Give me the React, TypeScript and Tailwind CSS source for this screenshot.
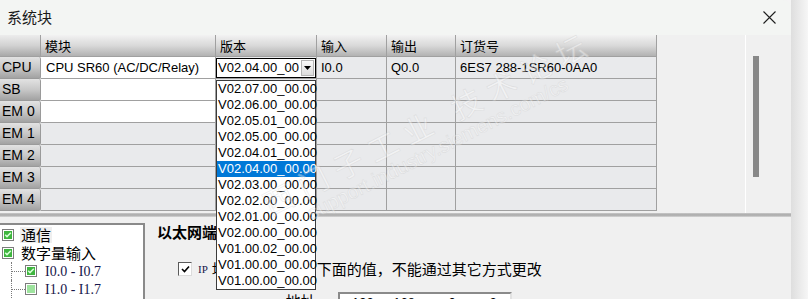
import React from "react";

const SANS = "font-['Liberation_Sans','Noto_Sans_CJK_SC',sans-serif]";
const CJK = "font-['Noto_Sans_CJK_SC','Liberation_Sans',sans-serif]";

const COLS = [
  { key: "module", label: "模块", w: "w-[175px]" },
  { key: "version", label: "版本", w: "w-[101px]" },
  { key: "input", label: "输入", w: "w-[70px]" },
  { key: "output", label: "输出", w: "w-[69px]" },
  { key: "order", label: "订货号", w: "w-[201px]" },
];

type Row = { name: string; module?: string; input?: string; output?: string; order?: string; white?: boolean };

const ROWS: Row[] = [
  { name: "CPU", module: "CPU SR60 (AC/DC/Relay)", input: "I0.0", output: "Q0.0", order: "6ES7 288-1SR60-0AA0", white: true },
  { name: "SB", white: true },
  { name: "EM 0", white: true },
  { name: "EM 1" },
  { name: "EM 2" },
  { name: "EM 3" },
  { name: "EM 4" },
];

const VERSIONS = [
  "V02.07.00_00.00",
  "V02.06.00_00.00",
  "V02.05.01_00.00",
  "V02.05.00_00.00",
  "V02.04.01_00.00",
  "V02.04.00_00.00",
  "V02.03.00_00.00",
  "V02.02.00_00.00",
  "V02.01.00_00.00",
  "V02.00.00_00.00",
  "V01.00.02_00.00",
  "V01.00.00_00.00",
  "V01.00.00_00.00",
];

const SELECTED = 5;

function GreenBox({ checked }: { checked: boolean }) {
  return (
    <svg width="12" height="12" viewBox="0 0 12 12" className="shrink-0">
      <rect x="0.5" y="0.5" width="11" height="11" fill="#ffffff" stroke="#7c7c7c" />
      <rect x="2" y="2" width="8" height="8" fill={checked ? "#3fb53f" : "#9ee39e"} />
      {checked && <path d="M3.2 5.8 L5 7.6 L8.8 3.8" fill="none" stroke="#d9ffd9" strokeWidth="1.5" />}
    </svg>
  );
}

function TreeLine() {
  return (
    <div className="relative ml-[9px] w-[14px] self-stretch">
      <div className="absolute bottom-0 left-0 top-0 border-l border-dotted border-[#7a7a7a]" />
      <div className="absolute left-0 right-0 top-1/2 border-t border-dotted border-[#7a7a7a]" />
    </div>
  );
}

export default function App() {
  return (
    <div className={`relative flex h-[299px] w-[808px] overflow-hidden bg-[#f4f4f4] text-[13px] text-black ${SANS}`}>
      <div className="flex w-[791px] shrink-0 flex-col overflow-hidden rounded-tr-[8px] bg-[#f0f0f0]">
        {/* title bar */}
        <div className="flex h-[35px] shrink-0 items-center justify-between bg-[#f3f5f3] pl-[7px] pr-[15px]">
          <span className={`text-[15px] text-[#1a1a1a] ${CJK}`}>系统块</span>
          <svg width="13" height="13" viewBox="0 0 13 13">
            <path d="M0.5 0.5 L12.5 12.5 M12.5 0.5 L0.5 12.5" stroke="#1f1f1f" strokeWidth="1.1" />
          </svg>
        </div>

        {/* module table */}
        <div className="flex h-[178px] shrink-0">
          <div className="flex w-[657px] flex-col">
            <div className="flex h-[22px] shrink-0">
              <div className="h-full w-[41px] border-b border-r border-[#a0a0a0] bg-gradient-to-b from-[#ececec] via-[#d2d2d2] to-[#a9a9a9]" />
              {COLS.map((c) => (
                <div
                  key={c.key}
                  className={`${c.w} flex h-full items-center border-b border-r border-[#a0a0a0] bg-gradient-to-b from-[#f2f2f2] via-[#d9d9d9] to-[#b2b2b2] pl-[4px] text-[13px] ${CJK}`}
                >
                  {c.label}
                </div>
              ))}
            </div>
            {ROWS.map((r, i) => (
              <div key={r.name} className="flex h-[22px] shrink-0">
                <div className="flex h-full w-[41px] items-center rounded-r-[2px] border-b border-r border-[#9a9a9a] bg-gradient-to-b from-[#e2e2e2] via-[#c8c8c8] to-[#a2a2a2] pl-[2px] text-[14px]">
                  {r.name}
                </div>
                <div
                  className={`flex h-full w-[175px] items-center border-b border-r border-[#a0a0a0] pl-[5px] ${r.white ? "bg-white" : "bg-[#e9eaec]"}`}
                >
                  {r.module}
                </div>
                <div className="flex h-full w-[101px] items-center border-b border-r border-[#a0a0a0] bg-[#e9eaec]">
                  {i === 0 && (
                    <div className="flex h-[20px] w-[100px] items-center border border-black bg-white pl-[1px]">
                      <span className="flex-1 overflow-hidden whitespace-nowrap text-[13px]">V02.04.00_00</span>
                      <div className="mr-px flex h-[16px] w-[13px] items-center justify-center border border-[#b5b5b5] bg-gradient-to-b from-[#fafafa] to-[#dcdcdc]">
                        <svg width="7" height="4" viewBox="0 0 7 4">
                          <path d="M0 0 L7 0 L3.5 4 Z" fill="#000" />
                        </svg>
                      </div>
                    </div>
                  )}
                </div>
                <div className="flex h-full w-[70px] items-center border-b border-r border-[#a0a0a0] bg-[#e9eaec] pl-[4px]">
                  {r.input}
                </div>
                <div className="flex h-full w-[69px] items-center border-b border-r border-[#a0a0a0] bg-[#e9eaec] pl-[4px]">
                  {r.output}
                </div>
                <div className="flex h-full w-[201px] items-center border-b border-r border-[#a0a0a0] bg-[#e9eaec] pl-[4px]">
                  {r.order}
                </div>
              </div>
            ))}
          </div>
          <div className="w-[88px]" />
          <div className="w-px bg-white" />
          <div className="flex flex-1 pl-[7px] pt-[21px]">
            <div className="h-[121px] w-[6px] bg-[#888888]" />
          </div>
        </div>

        {/* splitter */}
        <div className="h-[4px] shrink-0 bg-gradient-to-b from-[#c9c9c9] via-[#a8a8a8] to-[#d6d6d6]" />

        {/* lower panel */}
        <div className="flex min-h-0 flex-1 overflow-hidden">
          <div className="mt-[6px] flex w-[145px] shrink-0 flex-col border-r-2 border-t-2 border-[#8a8a8a] bg-white pl-[2px] pt-px">
            <div className="flex h-[18px] shrink-0 items-center gap-[6px]">
              <GreenBox checked />
              <span className={`bg-[#efefef] px-px text-[15px] leading-[16px] ${CJK}`}>通信</span>
            </div>
            <div className="flex h-[18px] shrink-0 items-center gap-[7px]">
              <GreenBox checked />
              <span className={`text-[15px] leading-[16px] ${CJK}`}>数字量输入</span>
            </div>
            {[
              { label: "I0.0 - I0.7", checked: true },
              { label: "I1.0 - I1.7", checked: false },
            ].map((c) => (
              <div key={c.label} className="flex h-[18px] shrink-0 items-center">
                <TreeLine />
                <GreenBox checked={c.checked} />
                <span className="ml-[8px] font-['Liberation_Serif',serif] text-[14px] text-[#17174a]">{c.label}</span>
              </div>
            ))}
          </div>

          <div className="flex flex-1 flex-col pl-[12px] pt-[5px]">
            <div className={`h-[20px] shrink-0 text-[15px] font-bold leading-[20px] ${CJK}`}>以太网端口</div>
            <div className="mt-[16px] flex shrink-0 items-center pl-[21px]">
              <div className="flex h-[14px] w-[14px] items-center justify-center border border-[#5a5a5a] border-r-[#dcdcdc] border-b-[#dcdcdc] bg-white">
                <svg width="9" height="8" viewBox="0 0 9 8">
                  <path d="M1 4 L3.5 6.5 L8 1.5" fill="none" stroke="#000" strokeWidth="1.6" />
                </svg>
              </div>
              <span className="ml-[6px] font-['Liberation_Serif',serif] text-[11px] text-[#17174a]">IP</span>
              <span className={`ml-[4px] text-[15px] ${CJK}`}>地址数据固定为下面的值，不能通过其它方式更改</span>
            </div>
            <div className="mt-[10px] flex shrink-0 items-start pl-[115px]">
              <span className="mt-[3px] font-['Liberation_Serif',serif] text-[11px] text-[#17174a]">IP</span>
              <span className={`ml-[4px] text-[15px] leading-[20px] ${CJK}`}>地址:</span>
              <div className="ml-[18px] mt-px flex h-[22px] w-[174px] items-center border-2 border-[#8a8a8a] border-b-[#f0f0f0] border-r-[#e2e2e2] bg-white pl-[12px] text-[13px]">
                <span>192</span>
                <span className="ml-[8px]">.</span>
                <span className="ml-[8px]">168</span>
                <span className="ml-[8px]">.</span>
                <span className="ml-[22px]">0</span>
                <span className="ml-[8px]">.</span>
                <span className="ml-[22px]">2</span>
              </div>
            </div>
          </div>
        </div>
      </div>

      {/* window shadow */}
      <div className="flex-1 bg-gradient-to-r from-[#dedede] to-[#f6f6f6]" />

      {/* dropdown list */}
      <div className="absolute left-[216px] top-[80px] flex w-[100px] flex-col border border-[#3c3c3c] bg-white">
        {VERSIONS.map((v, i) => (
          <div
            key={i}
            className={`h-[16px] whitespace-nowrap pl-px text-[13px] leading-[16px] ${i === SELECTED ? "bg-[#0078d7] text-white" : "text-black"}`}
          >
            {v}
          </div>
        ))}
      </div>

      {/* forum watermark */}
      <div className="pointer-events-none absolute left-[250px] top-[105px] w-[360px] -rotate-[27deg] select-none whitespace-nowrap text-center opacity-40">
        <div className={`text-[30px] leading-[34px] tracking-[9px] text-white [-webkit-text-stroke:0.5px_#c8c8c8] ${CJK}`}>
          西门子工业 技术论坛
        </div>
        <div className="text-[20px] leading-[22px] text-white [-webkit-text-stroke:0.5px_#c8c8c8]">
          support.industry.siemens.com/cs
        </div>
      </div>
    </div>
  );
}
